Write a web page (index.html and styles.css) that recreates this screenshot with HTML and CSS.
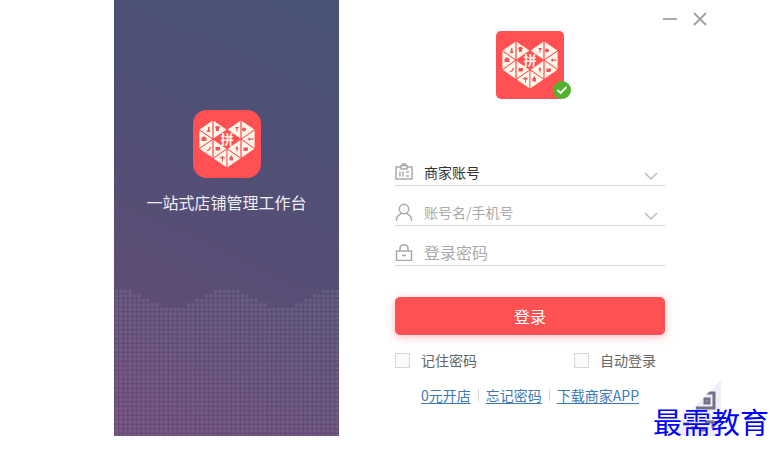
FILE: index.html
```
<!DOCTYPE html>
<html lang="zh-CN">
<head>
  <meta charset="UTF-8">
  <meta name="viewport" content="width=device-width, initial-scale=1.0">
  <title>商家登录</title>
  <link rel="stylesheet" href="styles.css">
</head>
<body>

<main class="login-window">
  <!-- Panneau de gauche -->
  <section class="brand">
    <svg class="brand-logo" viewBox="0 0 68 68" aria-hidden="true">
      <g id="logo">
        <path id="logo-half" fill="#fff6ea" stroke="#ff5153" stroke-width=".8" stroke-linejoin="round" d="M6 19.600 20 10v19.200zM20 10v19.200l14-9.600zM6 19.600v19.200l14-9.600zM6 38.800l14-9.600v19.200zM20 29.200v19.200l14-9.600zM34 38.800V58l-14-9.600z"/>
        <use href="#logo-half" transform="matrix(-1 0 0 1 68 0)"/>
        <g fill="#e8585a">
          <path d="M15 17h1.500v2.500l1 2.500h-4l1.500-2.500z"/>
          <path d="M22 17l1.500-1h2l1.500 1-.8 1.500-.5 2.500h-2.500l-.5-2.500z"/>
          <path d="M8.500 28.500l1.500-2h2l1.500 2v2.500h-5z"/>
          <path d="M13.500 40.500c2-.5 3-2 3.500-4l1 .8c-.5 2.500-2 4-4.500 4z"/>
          <path d="M22.500 37h4.500v3.500h-4.500z"/>
          <path d="M27 48.500c.5-3 4.500-3 5 0h-2v3h-1v-3z"/>
          <path d="M36.500 47h1v-1.500h1.500V47h1v3.500h-3.500z"/>
          <path d="M42 17h4l-1.500 2v2.500h-1V19z"/>
          <circle cx="51" cy="19.500" r="2"/>
          <path d="M54.500 29l2.500-1.800v1.200h3.500v1.400H57V31z"/>
          <path d="M44 36l1.500 2.500-1 1v2h-1v-2l-1-1z"/>
          <path d="M50.500 37.500h4.500v2.500l-1 1h-3.500z"/>
        </g>
        <text x="34" y="34" class="logo-char">拼</text>
      </g>
    </svg>
    <p class="brand-text">一站式店铺管理工作台</p>
    <svg class="dots" viewBox="0 0 225 147" preserveAspectRatio="none" aria-hidden="true">
      <defs>
        <pattern id="dot" width="4.500" height="4.500" patternUnits="userSpaceOnUse">
          <rect x="1" y="1" width="3" height="3" fill="#fff" fill-opacity=".1"/>
        </pattern>
      </defs>
      <path fill="url(#dot)" d="M0 0H18V4.500H27V9H36V13.500H45V18H72V13.500H81V9H90V4.500H99V0H126V4.500H135V9H144V13.500H153V18H180V13.500H189V9H198V4.500H207V0H225V147H0z"/>
    </svg>
  </section>

  <!-- Formulaire de connexion -->
  <section class="panel">
    <div class="window-buttons">
      <button type="button" aria-label="最小化"><svg width="14" height="14" viewBox="0 0 14 14"><path d="M0 7h14"/></svg></button>
      <button type="button" aria-label="关闭"><svg width="14" height="14" viewBox="0 0 14 14"><path d="M1 1l12 12M13 1L1 13"/></svg></button>
    </div>

    <div class="avatar">
      <svg class="avatar-logo" viewBox="0 0 68 68" aria-hidden="true"><use href="#logo"/></svg>
      <svg class="avatar-badge" viewBox="0 0 18 18" aria-hidden="true">
        <circle cx="9" cy="9" r="9" fill="#52b22b"/>
        <path d="M4.500 9l3 3 6-6" fill="none" stroke="#fff" stroke-width="1.800"/>
      </svg>
    </div>

    <form class="login-form">
      <div class="field">
        <svg class="field-icon" viewBox="0 0 18 18" aria-hidden="true"><path d="M6 4H1v12h16V4h-5M6 2.500h6V6H6zM7.500 2.500V1h3v1.500M5 8.500v5M8 8.500v5M11 9h3M11 13h3"/></svg>
        <select class="account-type" aria-label="账号类型"><option>商家账号</option></select>
        <svg class="chevron" viewBox="0 0 14 8" aria-hidden="true"><path d="M1 1l6 6 6-6"/></svg>
      </div>
      <div class="field">
        <svg class="field-icon" viewBox="0 0 18 18" aria-hidden="true"><circle cx="9" cy="6" r="4.700"/><path d="M1.500 18v-1c0-3.500 2.500-5.500 5-6.500M11.500 10.500c2.500 1 5 3 5 6.500v1"/></svg>
        <input type="text" aria-label="账号" placeholder="账号名/手机号">
        <button type="button" class="field-button" aria-label="历史账号"><svg class="chevron" viewBox="0 0 14 8" aria-hidden="true"><path d="M1 1l6 6 6-6"/></svg></button>
      </div>
      <div class="field">
        <svg class="field-icon" viewBox="0 0 18 18" aria-hidden="true"><path d="M1.500 8h15v9.500h-15zM5 8V5.500c0-5 8-5 8 0V8M7 12.500h4"/></svg>
        <input type="password" class="password" aria-label="密码" placeholder="登录密码">
      </div>

      <button type="submit" class="submit">登录</button>

      <div class="options">
        <label><input type="checkbox">记住密码</label>
        <label><input type="checkbox">自动登录</label>
      </div>
    </form>

    <nav class="links">
      <a href="#">0元开店</a>
      <a href="#">忘记密码</a>
      <a href="#">下载商家APP</a>
    </nav>

    <svg class="qr-corner" viewBox="0 0 46 56" aria-hidden="true">
      <path d="M46 0v56H0V46z" fill="#efedf7"/>
      <path d="M27 13h12v15H21M30 19h4v4h-4zM8 44h6M16 48h7M30 42h8v6M26 50h5" fill="none" stroke="#747087" stroke-width="3"/>
      <path d="M0 0h46L0 46z" fill="#fff"/>
    </svg>
  </section>
</main>

<div class="watermark">最需教育</div>

</body>
</html>
```

FILE: styles.css
```
/* Style global */
* {
  box-sizing: border-box;
}

body {
  margin: 0;
  position: relative;
  background-color: #ffffff;
  color: #666666;
  font-family: "Noto Sans CJK SC", sans-serif;
  font-size: 14px;
  line-height: 20px;
}

button,
input,
select {
  margin: 0;
  padding: 0;
  border: none;
  background: none;
  font: inherit;
  color: inherit;
}

.logo-char {
  fill: #fff6ea;
  font-size: 13px;
  font-weight: bold;
  text-anchor: middle;
}

/* Fenêtre */
.login-window {
  display: grid;
  grid-template-columns: 225px 1fr;
  margin: 0 54px 0 114px;
}

/* Panneau de gauche */
.brand {
  display: flex;
  flex-direction: column;
  align-items: center;
  padding-top: 110px;
  background: linear-gradient(205deg, #475375 0%, #544e75 50%, #6b4a78 100%);
}

.brand-logo {
  width: 68px;
  height: 68px;
  border-radius: 14px;
  background-color: #ff5153;
}

.brand-text {
  margin: 14px 0 0;
  color: #f0eef5;
  font-size: 16px;
}

.dots {
  display: block;
  width: 100%;
  height: 147px;
  margin-top: auto;
}

/* Panneau de droite */
.panel {
  position: relative;
  display: flex;
  flex-direction: column;
  padding: 12px 56px 31px;
}

.window-buttons {
  display: flex;
  justify-content: flex-end;
  gap: 16px;
  height: 19px;
  margin-right: -42px;
}

.window-buttons button {
  width: 14px;
  height: 14px;
  cursor: pointer;
}

.window-buttons svg {
  display: block;
  stroke: #a0a0a0;
  stroke-width: 1.8;
}

.avatar {
  position: relative;
  align-self: center;
  width: 68px;
  height: 68px;
}

.avatar-logo {
  display: block;
  width: 68px;
  height: 68px;
  border-radius: 5px;
  background-color: #ff5153;
}

.avatar-badge {
  position: absolute;
  right: -7px;
  bottom: 0;
  width: 18px;
  height: 18px;
}

.login-form {
  margin-top: 47px;
}

.field {
  display: flex;
  align-items: center;
  height: 40px;
  padding: 12px 7px 0 0;
  border-bottom: 1px solid #d6d6d6;
}

.field-icon {
  width: 18px;
  height: 18px;
  margin-right: 11px;
  fill: none;
  stroke: #aaaaaa;
  stroke-width: 1.5;
}

.field input,
.field select {
  flex: 1;
  min-width: 0;
  height: 25px;
  outline: none;
  appearance: none;
}

.account-type {
  color: #333333;
}

.field .password {
  font-size: 16px;
}

.field input::placeholder {
  color: #aaaaaa;
}

.field-button {
  cursor: pointer;
}

.chevron {
  display: block;
  width: 14px;
  height: 8px;
  margin-top: 8px;
  fill: none;
  stroke: #bcbcbc;
  stroke-width: 1.5;
}

.submit {
  display: block;
  width: 100%;
  height: 38px;
  margin-top: 31px;
  border-radius: 5px;
  background-color: #ff5153;
  box-shadow: 0 2px 8px rgba(255, 81, 83, 0.4);
  color: #ffffff;
  font-size: 16px;
  cursor: pointer;
}

.options {
  display: flex;
  justify-content: space-between;
  margin-top: 15px;
  padding-right: 9px;
}

.options label {
  display: flex;
  align-items: center;
  gap: 11px;
}

.options input {
  width: 15px;
  height: 15px;
  border: 1px solid #d6d6d6;
  background-color: #fafafa;
  appearance: none;
}

/* Liens */
.links {
  display: flex;
  justify-content: center;
  margin-top: 15px;
}

.links a {
  color: #3c7ab8;
  text-underline-offset: 2px;
}

.links a + a::before {
  content: "";
  display: inline-block;
  width: 1px;
  height: 12px;
  margin: 0 7px;
  background-color: #d6d6d6;
}

.qr-corner {
  position: absolute;
  right: 0;
  bottom: 0;
  width: 46px;
  height: 56px;
}

/* Filigrane */
.watermark {
  position: absolute;
  right: 6px;
  bottom: -1px;
  color: #0000ff;
  font-family: KaiTi, "Noto Sans CJK SC", sans-serif;
  font-size: 29px;
  line-height: 32px;
}
```
